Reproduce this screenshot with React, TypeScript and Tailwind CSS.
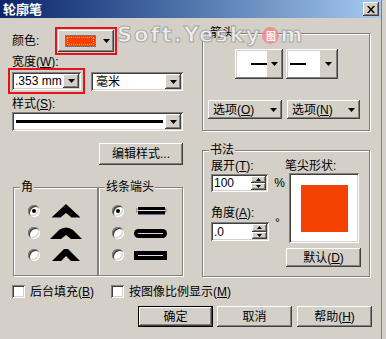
import React from "react";

const RAISED =
  "shadow-[inset_-1px_-1px_#404040,inset_1px_1px_#ffffff,inset_-2px_-2px_#808080,inset_2px_2px_#d4d0c8]";
const SUNKEN =
  "shadow-[inset_1px_1px_#808080,inset_-1px_-1px_#ffffff,inset_2px_2px_#404040,inset_-2px_-2px_#d4d0c8]";

function Down() {
  return (
    <svg width="7" height="4" viewBox="0 0 7 4" className="block">
      <polygon points="0,0 7,0 3.5,4" fill="#000" />
    </svg>
  );
}

function DropBtn() {
  return (
    <div className={`w-[16px] h-full bg-[#d4d0c8] ${RAISED} flex items-center justify-center`}>
      <Down />
    </div>
  );
}

function Combo({ className, children }: { className: string; children?: React.ReactNode }) {
  return (
    <div className={`${SUNKEN} bg-white p-[2px] flex ${className}`}>
      <div className="flex-1 flex items-center pl-[1px] overflow-hidden whitespace-nowrap">{children}</div>
      <DropBtn />
    </div>
  );
}

function Group({
  label,
  className,
  children,
}: {
  label: string;
  className: string;
  children?: React.ReactNode;
}) {
  return (
    <div className={`relative border border-[#808080] shadow-[inset_1px_1px_#ffffff,1px_1px_#ffffff] ${className}`}>
      <span className="absolute -top-[7px] left-[6px] bg-[#d4d0c8] px-[1px] leading-[12px] whitespace-nowrap">
        {label}
      </span>
      {children}
    </div>
  );
}

function Button({ className, children }: { className: string; children?: React.ReactNode }) {
  return (
    <div className={`bg-[#d4d0c8] ${RAISED} flex items-center justify-center whitespace-nowrap ${className}`}>
      {children}
    </div>
  );
}

function Radio({ checked }: { checked?: boolean }) {
  return (
    <div className="w-[12px] h-[12px] rounded-full bg-white shadow-[inset_1px_1px_#808080,inset_-1px_-1px_#ffffff,inset_2px_2px_#404040,inset_-2px_-2px_#d4d0c8] flex items-center justify-center shrink-0">
      {checked && <div className="w-[4px] h-[4px] rounded-full bg-black" />}
    </div>
  );
}

function Check() {
  return <div className={`w-[13px] h-[13px] bg-white ${SUNKEN} shrink-0`} />;
}

function Spin({ value, className }: { value: string; className: string }) {
  return (
    <div className={`${SUNKEN} bg-white p-[2px] flex ${className}`}>
      <div className="flex-1 flex items-center pl-[1px]">{value}</div>
      <div className="w-[15px] flex flex-col">
        <div className={`flex-1 bg-[#d4d0c8] ${RAISED} flex items-center justify-center`}>
          <svg width="5" height="3" viewBox="0 0 5 3" className="block">
            <polygon points="0,3 5,3 2.5,0" fill="#000" />
          </svg>
        </div>
        <div className={`flex-1 bg-[#d4d0c8] ${RAISED} flex items-center justify-center`}>
          <svg width="5" height="3" viewBox="0 0 5 3" className="block">
            <polygon points="0,0 5,0 2.5,3" fill="#000" />
          </svg>
        </div>
      </div>
    </div>
  );
}

export default function App() {
  return (
    <div className="w-[386px] h-[339px] bg-[#d4d0c8] relative overflow-hidden text-[12px] leading-[12px] text-black font-['Liberation_Sans','Noto_Sans_CJK_SC',sans-serif]">
      <div className="w-[382px] h-[339px] border-r border-[#808080]">
        {/* Title bar */}
        <div className="h-[18px] bg-linear-to-r from-[#0a246a] to-[#a6caf0] flex items-center justify-between pl-[3px] pr-[2px]">
          <span className="text-white font-bold text-[13px] leading-[13px]">轮廓笔</span>
          <div className={`w-[16px] h-[14px] bg-[#d4d0c8] ${RAISED} flex items-center justify-center`}>
            <svg width="8" height="7" viewBox="0 0 8 7" className="block">
              <path d="M0 0h2l2 2.5L6 0h2L5 3.5 8 7H6L4 4.5 2 7H0l3-3.5z" fill="#000" />
            </svg>
          </div>
        </div>

        {/* Top section */}
        <div className="flex h-[259px]">
          {/* Left column */}
          <div className="w-[185px] pl-[8px] flex flex-col">
            <div className="flex items-center mt-[9px] h-[28px]">
              <span className="ml-[4px] w-[43px]">颜色:</span>
              <div className="w-[62px] h-[28px] border-2 border-[#e5121b] p-[1px]">
                <div className={`w-full h-full ${RAISED} flex items-center pl-[7px]`}>
                  <div className="w-[31px] h-[12px] border border-[#7a7a7a] bg-[#f24100] p-[1px]">
                    <div className="w-full h-full border border-dotted border-[#ffc070]" />
                  </div>
                  <div className="ml-[7px]">
                    <Down />
                  </div>
                </div>
              </div>
            </div>

            <div className="ml-[4px] mt-[2px] h-[11px] leading-[11px]">
              宽度(<u>W</u>):
            </div>
            <div className="flex items-start h-[26px]">
              <div className="w-[77px] h-[26px] border-2 border-[#e5121b] p-[2px]">
                <Combo className="w-[69px] h-[18px]">.353 mm</Combo>
              </div>
              <Combo className="ml-[6px] mt-[4px] w-[92px] h-[19px]">
                <span className="pl-[2px]">毫米</span>
              </Combo>
            </div>

            <div className="ml-[4px] mt-[4px] h-[12px]">
              样式(<u>S</u>):
            </div>
            <Combo className="ml-[4px] mt-[2px] w-[171px] h-[19px]">
              <div className="h-[3px] bg-black w-full ml-[1px] mr-[2px]" />
            </Combo>

            <Button className="ml-[91px] mt-[12px] w-[84px] h-[22px]">编辑样式...</Button>

            <div className="flex ml-[5px] mt-[22px]">
              <Group label="角" className="w-[85px] h-[89px]">
                <div className="flex flex-col pt-[12px]">
                  <div className="flex items-center h-[22px] pl-[14px]">
                    <Radio checked />
                    <svg width="28" height="14" viewBox="0 0 28 14" className="ml-[12px] block">
                      <polygon points="0,13 14,0 28,13 19,13 14,9 9,13" fill="#000" />
                      <line x1="0" y1="13.5" x2="9" y2="13.5" stroke="#6a6a9a" />
                      <line x1="19" y1="13.5" x2="28" y2="13.5" stroke="#6a6a9a" />
                    </svg>
                  </div>
                  <div className="flex items-center h-[22px] pl-[14px]">
                    <Radio />
                    <svg width="32" height="14" viewBox="0 0 32 14" className="ml-[10px] block">
                      <path d="M0 13 L9 4 Q16 -1 23 4 L32 13 L21 13 L16 9 L11 13 Z" fill="#000" />
                    </svg>
                  </div>
                  <div className="flex items-center h-[22px] pl-[14px]">
                    <Radio />
                    <svg width="28" height="14" viewBox="0 0 28 14" className="ml-[12px] block">
                      <polygon points="0,13 12,1 16,1 28,13 19,13 14,8 9,13" fill="#000" />
                    </svg>
                  </div>
                </div>
              </Group>
              <Group label="线条端头" className="w-[85px] h-[89px]">
                <div className="flex flex-col pt-[12px]">
                  <div className="flex items-center h-[22px] pl-[13px]">
                    <Radio checked />
                    <svg width="31" height="8" viewBox="0 0 31 8" className="ml-[12px] block">
                      <rect x="2" y="0" width="27" height="7" fill="#000" />
                      <line x1="1" y1="3.5" x2="30" y2="3.5" stroke="#e8e8e8" strokeWidth="1" />
                      <rect x="0.5" y="2" width="1.5" height="3" fill="#fff" stroke="#555" strokeWidth="0.5" />
                      <rect x="29" y="2" width="1.5" height="3" fill="#fff" stroke="#555" strokeWidth="0.5" />
                      <line x1="2" y1="7.5" x2="29" y2="7.5" stroke="#6a6a9a" />
                    </svg>
                  </div>
                  <div className="flex items-center h-[22px] pl-[13px]">
                    <Radio />
                    <svg width="33" height="9" viewBox="0 0 33 9" className="ml-[10px] block">
                      <rect x="0" y="0" width="33" height="9" rx="4.5" fill="#000" />
                      <line x1="4" y1="4.5" x2="29" y2="4.5" stroke="#e6c8e6" strokeWidth="1" />
                    </svg>
                  </div>
                  <div className="flex items-center h-[22px] pl-[13px]">
                    <Radio />
                    <svg width="33" height="9" viewBox="0 0 33 9" className="ml-[10px] block">
                      <rect x="0" y="0" width="33" height="9" fill="#000" />
                      <line x1="4" y1="4.5" x2="29" y2="4.5" stroke="#e0e0f0" strokeWidth="1" />
                    </svg>
                  </div>
                </div>
              </Group>
            </div>
          </div>

          {/* Right column */}
          <div className="ml-[17px] w-[168px] flex flex-col">
            <Group label="箭头" className="mt-[15px] h-[98px]">
              <div className="flex ml-[32px] mt-[15px] gap-[3px]">
                <div className={`w-[48px] h-[30px] bg-[#d4d0c8] ${RAISED} p-[2px] flex`}>
                  <div className="w-[30px] h-full bg-white flex items-center justify-end">
                    <div className="w-[16px] h-[2px] bg-black" />
                  </div>
                  <div className="flex-1 flex items-center justify-center">
                    <Down />
                  </div>
                </div>
                <div className={`w-[52px] h-[30px] bg-[#d4d0c8] ${RAISED} p-[2px] flex`}>
                  <div className="w-[32px] h-full bg-white flex items-center pl-[2px]">
                    <div className="w-[16px] h-[2px] bg-black" />
                  </div>
                  <div className="flex-1 flex items-center justify-center">
                    <Down />
                  </div>
                </div>
              </div>
              <div className="flex ml-[5px] mt-[21px] gap-[5px]">
                <Button className="w-[74px] h-[19px] !justify-between pl-[5px] pr-[5px]">
                  <span>
                    选项(<u>O</u>)
                  </span>
                  <Down />
                </Button>
                <Button className="w-[73px] h-[19px] !justify-between pl-[5px] pr-[5px]">
                  <span>
                    选项(<u>N</u>)
                  </span>
                  <Down />
                </Button>
              </div>
            </Group>

            <Group label="书法" className="mt-[19px] h-[127px]">
              <div className="flex">
                <div className="ml-[8px] mt-[9px] w-[74px] flex flex-col">
                  <div className="h-[12px]">
                    展开(<u>T</u>):
                  </div>
                  <div className="flex items-center mt-[2px]">
                    <Spin value="100" className="w-[58px] h-[18px]" />
                    <span className="ml-[6px]">%</span>
                  </div>
                  <div className="mt-[15px] h-[12px]">
                    角度(<u>A</u>):
                  </div>
                  <div className="flex items-start mt-[3px]">
                    <Spin value=".0" className="w-[58px] h-[19px]" />
                    <span className="ml-[6px] -mt-[5px]">°</span>
                  </div>
                </div>
                <div className="mt-[9px] flex flex-col">
                  <div className="h-[12px]">笔尖形状:</div>
                  <div className={`ml-[4px] mt-[1px] w-[70px] h-[70px] bg-white ${SUNKEN} flex items-center justify-center`}>
                    <div className="w-[47px] h-[47px] bg-[#f24100]" />
                  </div>
                  <Button className="ml-[1px] mt-[5px] w-[75px] h-[19px]">
                    默认(<u>D</u>)
                  </Button>
                </div>
              </div>
            </Group>
          </div>
        </div>

        {/* Checkboxes */}
        <div className="flex items-center mt-[8px] h-[13px]">
          <div className="w-[111px] pl-[12px] flex items-center">
            <Check />
            <span className="ml-[5px] whitespace-nowrap">
              后台填充(<u>B</u>)
            </span>
          </div>
          <div className="flex items-center">
            <Check />
            <span className="ml-[5px] whitespace-nowrap">
              按图像比例显示(<u>M</u>)
            </span>
          </div>
        </div>

        {/* Buttons */}
        <div className="flex mt-[8px] ml-[138px] gap-[4px]">
          <div className="w-[75px] h-[21px] border border-black">
            <Button className="w-full h-full">确定</Button>
          </div>
          <Button className="w-[75px] h-[21px]">取消</Button>
          <Button className="ml-[1px] w-[75px] h-[21px]">
            帮助(<u>H</u>)
          </Button>
        </div>
      </div>

      {/* Watermark overlay */}
      <div className="absolute left-[117px] top-[25px] flex items-center font-['DejaVu_Sans'] font-bold text-[21px] leading-[21px] text-[#f4f4f4] [-webkit-text-stroke:1px_#a0a0a0] tracking-[2px] opacity-85 pointer-events-none">
        Soft.Yesky
        <span className="mx-[1px] w-[17px] h-[17px] rounded-full bg-[#f08a8a] text-white text-[10px] leading-[10px] tracking-normal [-webkit-text-stroke:0px] flex items-center justify-center font-['Noto_Sans_CJK_SC']">
          图
        </span>
        m
      </div>
    </div>
  );
}
